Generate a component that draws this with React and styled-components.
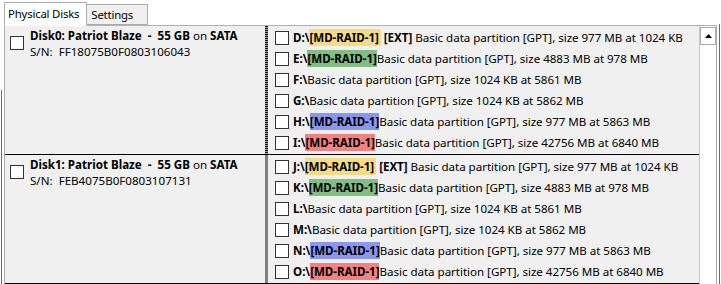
import React from 'react';
import styled, { createGlobalStyle, css } from 'styled-components';

const Global = createGlobalStyle`
  html, body { margin: 0; padding: 0; background: #ffffff; overflow: hidden; }
  body { font-family: "Noto Sans", "Open Sans", sans-serif; font-size: 11.6px; color: #000; }
`;

const Frame = styled.div`
  width: 721px;
  height: 284px;
  position: relative;
  overflow: hidden;
  background: #fff;
`;

const TabStrip = styled.div`
  display: flex;
  align-items: flex-end;
  height: 26px;
  padding-left: 4px;
  position: relative;
  z-index: 2;
`;

const Tab = styled.div`
  box-sizing: border-box;
  border: 1px solid #acacac;
  display: flex;
  align-items: center;
  font-size: 11.4px;
  letter-spacing: -0.2px;
  ${(p) =>
    p.$active
      ? css`
          background: #fff;
          height: 24px;
          padding: 0 7px 1px 3px;
          border-bottom-color: #fff;
        `
      : css`
          background: #f0f0f0;
          height: 21px;
          padding: 0 14px 0 4px;
          margin-bottom: 1px;
          border-left: none;
        `}
`;

const TabPanel = styled.div`
  box-sizing: border-box;
  margin: -1px 4px 0 4px;
  border: 1px solid #acacac;
  border-top-color: #a3b3c9;
  height: 300px;
  display: flex;
  background: #fff;
`;

const List = styled.div`
  flex: 1;
  display: flex;
  flex-direction: column;
`;

const DiskRow = styled.div`
  display: flex;
  height: 128px;
  border-bottom: 1px solid #000;
  background: #f0f0f0;
`;

const DiskCell = styled.div`
  width: 260px;
  display: flex;
  align-items: flex-start;
  gap: 6px;
  padding: 10px 0 0 5px;
  box-sizing: border-box;
`;

const Splitter = styled.div`
  width: 3px;
  ${(p) =>
    p.$focused
      ? css`
          background: repeating-linear-gradient(
            to bottom,
            #222 0px,
            #222 1px,
            #909090 1px,
            #909090 2px
          );
        `
      : css`
          background: #808080;
        `}
`;

const PartList = styled.div`
  flex: 1;
  display: flex;
  flex-direction: column;
  padding: 1px 0 0 7px;
`;

const PartRow = styled.div`
  display: flex;
  align-items: center;
  height: 21px;
  gap: 4px;
  white-space: nowrap;
`;

const Box = styled.span`
  box-sizing: border-box;
  width: 14px;
  height: 14px;
  border: 1px solid #333;
  background: #fff;
  flex: none;
`;

const DiskText = styled.div`
  display: flex;
  flex-direction: column;
  line-height: 16px;
  margin-top: -8px;
  white-space: pre;
`;

const B = styled.span`
  font-weight: 700;
`;

const N = styled.span`
  font-weight: 400;
`;

const raidColors = {
  yellow: '#f3dc84',
  green: '#82bd82',
  blue: '#8a96f2',
  red: '#f28282',
};

const Tag = styled.span`
  font-weight: 700;
  background: ${(p) => raidColors[p.$c]};
  padding: 1px ${(p) => (p.$pad ? '2px' : '0')} 1px 0;
  line-height: 17px;
`;

const Line = styled.span`
  line-height: 17px;
  white-space: pre;
  letter-spacing: -0.04px;
`;

const ScrollBar = styled.div`
  width: 17px;
  box-sizing: border-box;
  border-left: 1px solid #c8c8c8;
  background: #fff;
  display: flex;
  flex-direction: column;
  justify-content: space-between;
  padding-top: 1px;
`;

const Arrow = styled.div`
  height: 18px;
  box-sizing: border-box;
  border: 1px solid #acacac;
  background: #fff;
  display: flex;
  align-items: center;
  justify-content: center;
`;

const Edge = styled.div`
  position: absolute;
  top: ${(p) => p.$top}px;
  ${(p) => p.$side}: 1px;
  width: 1px;
  bottom: 0;
  background: #1f7fd6;
`;

const disks = [
  {
    name: 'Disk0',
    sn: 'FF18075B0F0803106043',
    focused: true,
    parts: [
      { l: 'D', c: 'yellow', ext: true, d: 'Basic data partition [GPT], size 977 MB at 1024 KB' },
      { l: 'E', c: 'green', d: 'Basic data partition [GPT], size 4883 MB at 978 MB' },
      { l: 'F', d: 'Basic data partition [GPT], size 1024 KB at 5861 MB' },
      { l: 'G', d: 'Basic data partition [GPT], size 1024 KB at 5862 MB' },
      { l: 'H', c: 'blue', d: 'Basic data partition [GPT], size 977 MB at 5863 MB' },
      { l: 'I', c: 'red', d: 'Basic data partition [GPT], size 42756 MB at 6840 MB' },
    ],
  },
  {
    name: 'Disk1',
    sn: 'FEB4075B0F0803107131',
    parts: [
      { l: 'J', c: 'yellow', ext: true, d: 'Basic data partition [GPT], size 977 MB at 1024 KB' },
      { l: 'K', c: 'green', d: 'Basic data partition [GPT], size 4883 MB at 978 MB' },
      { l: 'L', d: 'Basic data partition [GPT], size 1024 KB at 5861 MB' },
      { l: 'M', d: 'Basic data partition [GPT], size 1024 KB at 5862 MB' },
      { l: 'N', c: 'blue', d: 'Basic data partition [GPT], size 977 MB at 5863 MB' },
      { l: 'O', c: 'red', d: 'Basic data partition [GPT], size 42756 MB at 6840 MB' },
    ],
  },
];

const UpIcon = () => (
  <svg width="7" height="4" viewBox="0 0 7 4">
    <path d="M0 4 L3.5 0 L7 4 Z" fill="#000" />
  </svg>
);
const DownIcon = () => (
  <svg width="7" height="4" viewBox="0 0 7 4">
    <path d="M0 0 L3.5 4 L7 0 Z" fill="#000" />
  </svg>
);

export default function App() {
  return (
    <>
      <Global />
      <Frame>
        <TabStrip>
          <Tab $active>Physical Disks</Tab>
          <Tab>Settings</Tab>
        </TabStrip>
        <TabPanel>
          <List>
            {disks.map((dk) => (
              <DiskRow key={dk.name}>
                <DiskCell>
                  <Box />
                  <DiskText>
                    <div>
                      <B>{`${dk.name}: Patriot Blaze  -  55 GB`}</B>
                      <N>{' on '}</N>
                      <B>SATA</B>
                    </div>
                    <div>{`S/N:  ${dk.sn}`}</div>
                  </DiskText>
                </DiskCell>
                <Splitter $focused={dk.focused} />
                <PartList>
                  {dk.parts.map((p) => (
                    <PartRow key={p.l}>
                      <Box />
                      <Line>
                        <B>{p.l}:\</B>
                        {p.c && (
                          <Tag $c={p.c} $pad={p.ext}>
                            [MD-RAID-1]
                          </Tag>
                        )}
                        {p.ext && <B>{' [EXT] '}</B>}
                        {p.d}
                      </Line>
                    </PartRow>
                  ))}
                </PartList>
              </DiskRow>
            ))}
          </List>
          <ScrollBar>
            <Arrow>
              <UpIcon />
            </Arrow>
            <Arrow>
              <DownIcon />
            </Arrow>
          </ScrollBar>
        </TabPanel>
        <Edge $side="left" $top={90} />
        <Edge $side="right" $top={24} />
      </Frame>
    </>
  );
}
